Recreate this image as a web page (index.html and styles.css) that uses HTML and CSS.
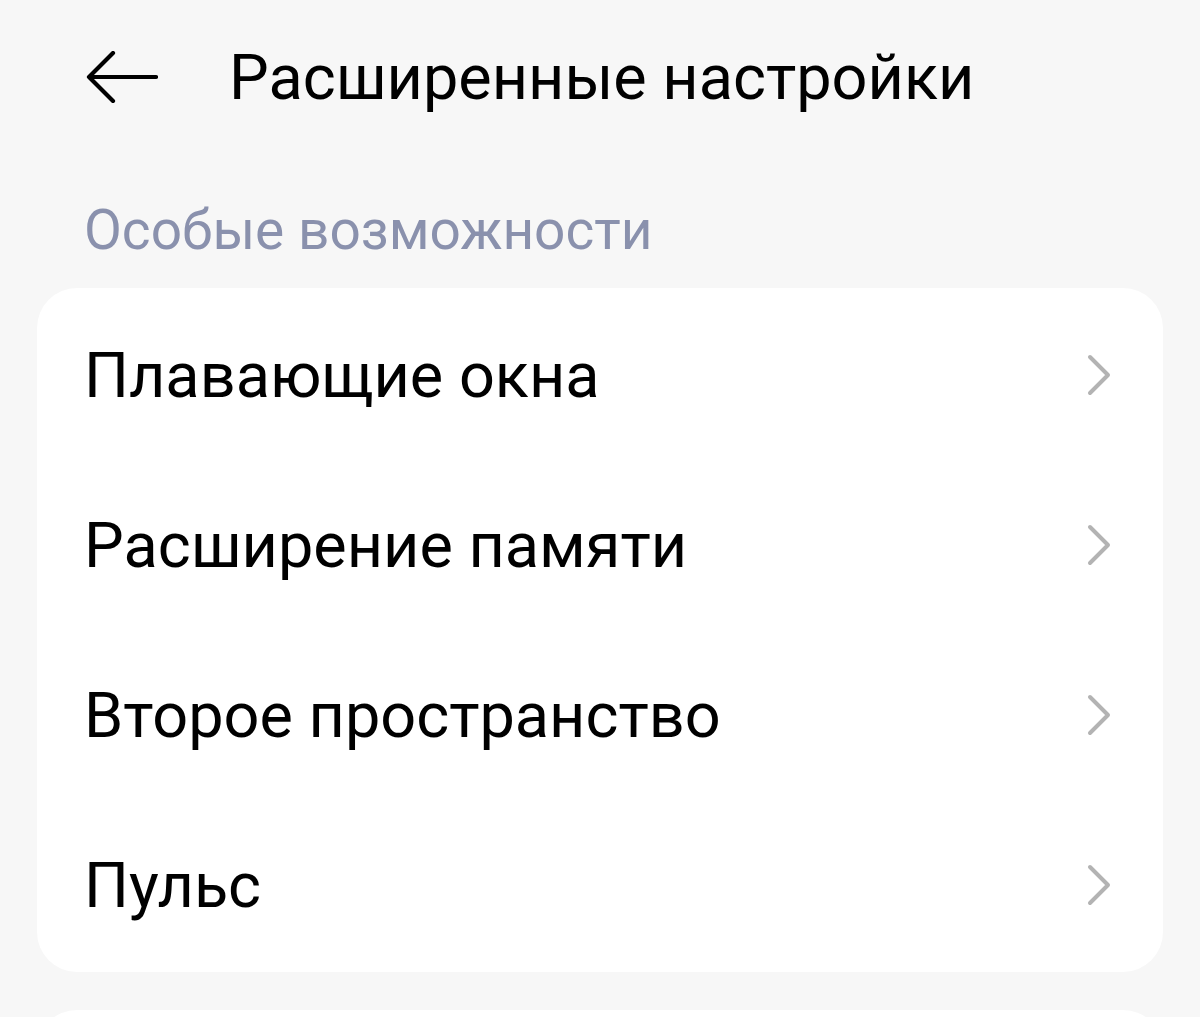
FILE: index.html
```html
<!DOCTYPE html>
<html lang="ru">
<head>
<meta charset="utf-8">
<title>Расширенные настройки</title>
<link rel="stylesheet" href="styles.css">
</head>
<body>
<div class="page">
<header class="topbar">
  <svg class="back" width="72" height="52" viewBox="0 0 72 52" aria-hidden="true">
    <path d="M70 26 H3 M27 2 L3 26 L27 50" fill="none" stroke="#000" stroke-width="4.2" stroke-linecap="round" stroke-linejoin="round"/>
  </svg>
  <h1 class="title">Расширенные настройки</h1>
</header>
<div class="section-label">Особые возможности</div>
<div class="card">
  <div class="row"><span class="row-text">Плавающие окна</span><svg class="chev" width="28" height="44" viewBox="0 0 28 44" aria-hidden="true"><path d="M4 4 L22 22 L4 40" fill="none" stroke="#b3b3b3" stroke-width="4" stroke-linecap="round" stroke-linejoin="round"/></svg></div>
  <div class="row"><span class="row-text">Расширение памяти</span><svg class="chev" width="28" height="44" viewBox="0 0 28 44" aria-hidden="true"><path d="M4 4 L22 22 L4 40" fill="none" stroke="#b3b3b3" stroke-width="4" stroke-linecap="round" stroke-linejoin="round"/></svg></div>
  <div class="row"><span class="row-text">Второе пространство</span><svg class="chev" width="28" height="44" viewBox="0 0 28 44" aria-hidden="true"><path d="M4 4 L22 22 L4 40" fill="none" stroke="#b3b3b3" stroke-width="4" stroke-linecap="round" stroke-linejoin="round"/></svg></div>
  <div class="row"><span class="row-text">Пульс</span><svg class="chev" width="28" height="44" viewBox="0 0 28 44" aria-hidden="true"><path d="M4 4 L22 22 L4 40" fill="none" stroke="#b3b3b3" stroke-width="4" stroke-linecap="round" stroke-linejoin="round"/></svg></div>
</div>
<div class="card card-next"></div>
</div>
</body>
</html>
```
FILE: styles.css
```css
html, body {
  margin: 0;
  padding: 0;
  background: #f7f7f7;
  font-family: Roboto, "Noto Sans", "Liberation Sans", sans-serif;
  color: #000;
}
.page {
  height: 1017px;
  overflow: hidden;
}
.topbar {
  height: 154px;
  display: flex;
  align-items: center;
  padding-left: 86px;
  gap: 71px;
}
.back {
  flex: none;
  display: block;
}
.title {
  margin: 0;
  font-size: 63px;
  font-weight: 400;
  line-height: 1;
}
.section-label {
  margin-top: 40px;
  padding-left: 84px;
  height: 72px;
  line-height: 72px;
  font-size: 55px;
  color: #8a91ad;
}
.card {
  margin: 22px 37px 0;
  background: #fff;
  border-radius: 40px;
  padding: 2px 0;
}
.row {
  height: 170px;
  display: flex;
  align-items: center;
  justify-content: space-between;
  padding: 0 49px 0 47px;
}
.row-text {
  font-size: 63px;
  line-height: 1;
}
.chev {
  flex: none;
  display: block;
}
.card-next {
  margin-top: 38px;
  height: 200px;
}
```
